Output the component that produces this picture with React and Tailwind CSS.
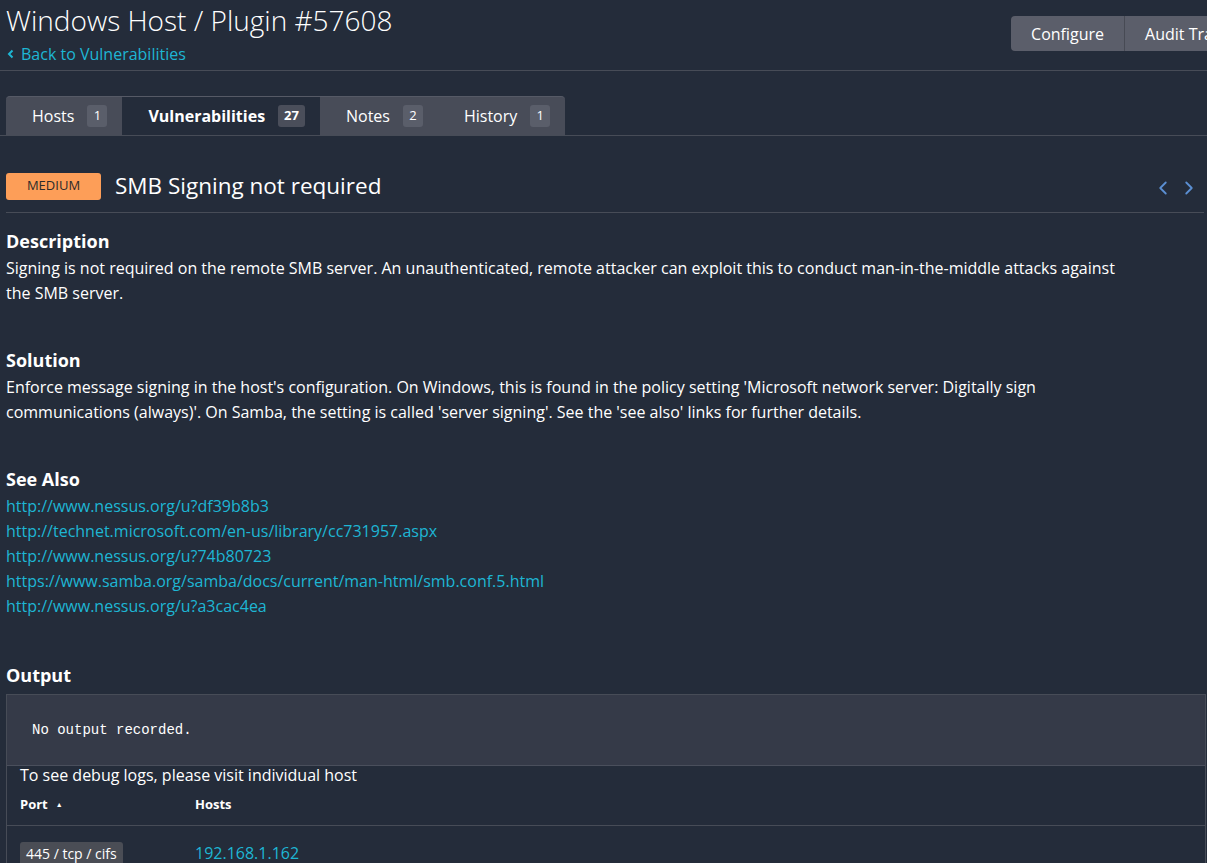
import { ChevronLeft, ChevronRight } from 'lucide-react';

const links = [
  'http://www.nessus.org/u?df39b8b3',
  'http://technet.microsoft.com/en-us/library/cc731957.aspx',
  'http://www.nessus.org/u?74b80723',
  'https://www.samba.org/samba/docs/current/man-html/smb.conf.5.html',
  'http://www.nessus.org/u?a3cac4ea',
];

const tabs = [
  { label: 'Hosts', count: 1 },
  { label: 'Vulnerabilities', count: 27, active: true },
  { label: 'Notes', count: 2 },
  { label: 'History', count: 1 },
];

function Section({ title, children }) {
  return (
    <div className="mb-[42px]">
      <h3 className="text-[18px] font-bold leading-[24px] mb-[3px]">{title}</h3>
      {children}
    </div>
  );
}

export default function App() {
  return (
    <div
      className="min-h-screen bg-[#242c3a] text-white overflow-hidden"
      style={{ fontFamily: '"Open Sans", "Noto Sans", sans-serif' }}
    >
      {/* Header */}
      <div className="flex items-start border-b border-[#474c57] pl-[6px] pb-[4px]">
        <div className="flex-1">
          <h1 className="text-[28px] font-light leading-[40px]">Windows Host / Plugin #57608</h1>
          <a className="mt-[2px] flex items-center gap-[6px] text-[16px] leading-[24px] text-[#1eb6d4] cursor-pointer">
            <svg width="8" height="10" viewBox="0 0 8 10" className="ml-[1px]">
              <path d="M5.5 1.5 L2 5 L5.5 8.5" fill="none" stroke="currentColor" strokeWidth="2" />
            </svg>
            Back to Vulnerabilities
          </a>
        </div>
        <div className="flex mt-[16px] -mr-[34px] shrink-0">
          <button className="h-[35px] px-[20px] bg-[#5b5e6a] text-[16px] rounded-l-[4px] border-r border-[#474a54]">
            Configure
          </button>
          <button className="h-[35px] px-[20px] bg-[#5b5e6a] text-[16px]">Audit Trail</button>
        </div>
      </div>

      {/* Tabs */}
      <div className="pt-[25px] border-b border-[#474c57] pl-[6px]">
        <div className="flex h-[39px] w-fit bg-[#484c58] rounded-t-[4px] border-t border-[#565a66]">
          {tabs.map((t) => (
            <div
              key={t.label}
              className={`flex items-center gap-[13px] pl-[26px] pr-[15px] pb-[1px] text-[16px] ${
                t.active ? 'bg-[#242c3a] font-bold' : ''
              } ${t.label === 'Hosts' ? 'rounded-tl-[4px]' : ''}`}
            >
              {t.label}
              <span
                className={`h-[22px] min-w-[20px] px-[6px] flex items-center justify-center rounded-[3px] text-[13px] ${
                  t.active ? 'bg-[#4a4e5a]' : 'bg-[#5a5e6a] font-normal'
                }`}
              >
                {t.count}
              </span>
            </div>
          ))}
        </div>
      </div>

      {/* Content */}
      <div className="px-[6px] pr-[1px]">
        <div className="flex items-center mt-[34px] pb-[10px] border-b border-[#474c57] mr-[2px]">
          <span className="w-[95px] h-[27px] flex items-center justify-center rounded-[3px] bg-[#fd9e58] text-[#2b2b2b] text-[13px]">
            MEDIUM
          </span>
          <h2 className="ml-[14px] text-[22.5px] leading-[32px]">SMB Signing not required</h2>
          <div className="ml-auto flex items-center gap-[4px] text-[#5b8fd2] mr-[4px] mt-[3px]">
            <ChevronLeft size={22} strokeWidth={2} />
            <ChevronRight size={22} strokeWidth={2} />
          </div>
        </div>

        <div className="pt-[16px] text-[16px] leading-[25px]">
          <div className="max-w-[1130px]">
            <Section title="Description">
              <p>
                Signing is not required on the remote SMB server. An unauthenticated, remote attacker can exploit this to
                conduct man-in-the-middle attacks against the SMB server.
              </p>
            </Section>
            <Section title="Solution">
              <p>
                Enforce message signing in the host's configuration. On Windows, this is found in the policy setting
                'Microsoft network server: Digitally sign communications (always)'. On Samba, the setting is called 'server
                signing'. See the 'see also' links for further details.
              </p>
            </Section>
            <Section title="See Also">
              <div className="flex flex-col">
                {links.map((l) => (
                  <a key={l} className="text-[#1eb6d4] w-fit cursor-pointer">
                    {l}
                  </a>
                ))}
              </div>
            </Section>
          </div>

          <div className="mt-[44px]">
            <h3 className="text-[18px] font-bold leading-[24px] mb-[7px]">Output</h3>
            <div className="border-x border-t border-[#474c57]">
              <div className="h-[71px] flex items-center px-[25px] bg-[#353a48] border-b border-[#4a4f5c]">
                <span className="text-[14px]" style={{ fontFamily: '"Liberation Mono", monospace' }}>
                  No output recorded.
                </span>
              </div>
              <div className="px-[13px] leading-[18px] text-[16px]">To see debug logs, please visit individual host</div>
              <div className="flex items-center h-[42px] border-b border-[#474c57] text-[13px] font-bold px-[13px]">
                <div className="w-[175px] flex items-center gap-[8px]">
                  Port <span className="text-[7px]">▲</span>
                </div>
                <div>Hosts</div>
              </div>
              <div className="flex items-center px-[13px] pt-[15px] pb-[10px]">
                <div className="w-[175px]">
                  <span className="inline-block bg-[#4a4d55] rounded-[3px] px-[6px] leading-[24px] text-[14px]">
                    445 / tcp / cifs
                  </span>
                </div>
                <a className="text-[#1eb6d4] text-[16px]">192.168.1.162</a>
              </div>
            </div>
          </div>
        </div>
      </div>
    </div>
  );
}
